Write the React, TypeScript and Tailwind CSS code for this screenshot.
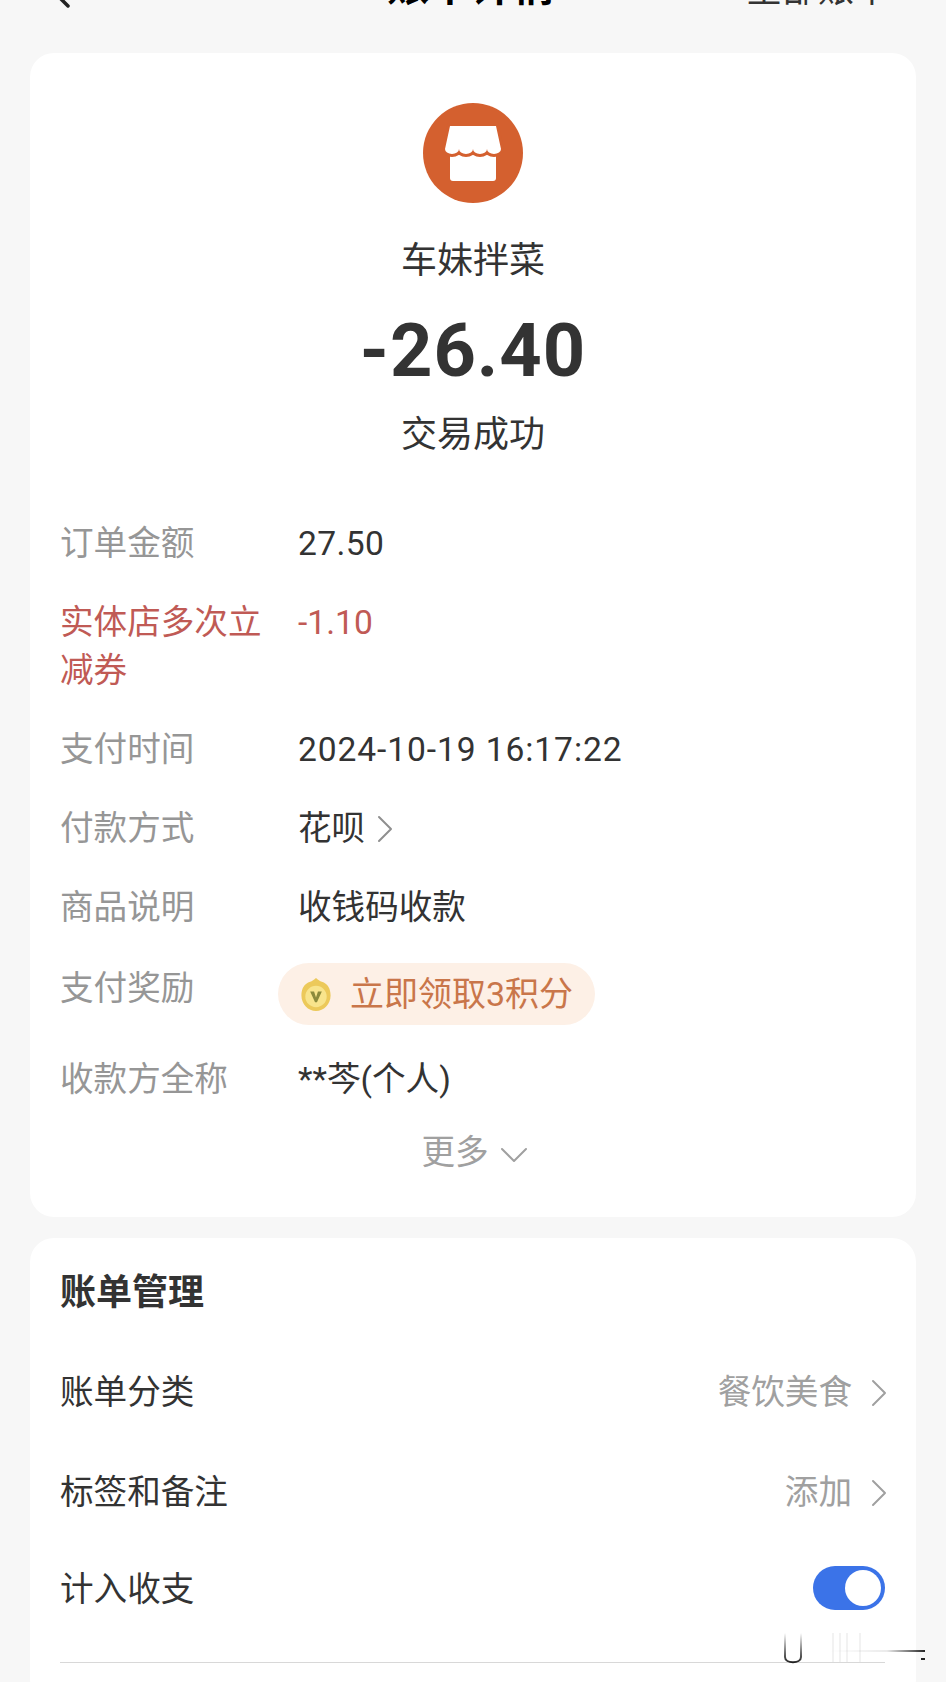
import { ChevronDown, ChevronLeft, ChevronRight } from "lucide-react";

const FONT = "font-['Roboto','Noto_Sans_CJK_SC',sans-serif]";

function Row({ label, children, className = "" }: { label: string; children: React.ReactNode; className?: string }) {
  return (
    <div className={`flex ${className}`}>
      <div className="w-[238px] shrink-0 text-[#969696]">{label}</div>
      <div className="text-[#333333]">{children}</div>
    </div>
  );
}

function ManageRow({ label, value }: { label: string; value: string }) {
  return (
    <div className="flex h-[100px] items-center justify-between">
      <span>{label}</span>
      <span className="flex items-center text-[#a0a0a0]">
        {value}
        <ChevronRight className="ml-[3px] mr-[-18px] size-[48px]" strokeWidth={1} />
      </span>
    </div>
  );
}

function ShopIcon() {
  return (
    <svg viewBox="0 0 100 100" className="size-[100px]">
      <circle cx="50" cy="50" r="50" fill="#d4602f" />
      <rect x="27" y="46" width="46" height="32" rx="3" fill="#fff" />
      <path
        d="M27 23h46l5 23a7 5 0 0 1-14 0a7 5 0 0 1-14 0a7 5 0 0 1-14 0a7 5 0 0 1-14 0z"
        fill="#fff"
        stroke="#d4602f"
        strokeWidth="6"
        paintOrder="stroke"
      />
    </svg>
  );
}

function CoinIcon() {
  return (
    <svg viewBox="0 0 32 36" className="h-[35px] w-[32px]">
      <path d="M16 1c2 2 4 3 6 4 6 2 9 7 9 14 0 9-7 16-15 16S1 28 1 19C1 12 4 7 10 5c2-1 4-2 6-4z" fill="#ecc95a" />
      <circle cx="16" cy="20" r="11" fill="#f8e48c" />
      <path d="M10 15h4l2 6 2-6h4l-5 11h-2z" fill="#8c8a3c" />
    </svg>
  );
}

export default function App() {
  return (
    <div className={`${FONT} relative h-[1682px] w-[946px] overflow-hidden bg-[#f7f7f7] text-[33.6px] leading-[48px] text-[#333333]`}>
      {/* Header, cut off by the top of the screenshot */}
      <div className="mt-[-37px] flex h-[48px] items-center pl-[33px]">
        <ChevronLeft className="mt-[10px] size-[56px] shrink-0 text-[#222222]" strokeWidth={1.5} />
        <span className="ml-[298px] shrink-0 text-[42px] font-bold text-black">账单详情</span>
        <span className="ml-[191px] mt-[6px] shrink-0 text-[36px] text-[#333333]">全部账单</span>
      </div>

      <div className="mx-[30px] mt-[42px] h-[1164px] rounded-[24px] bg-white px-[30px] pt-[50px]">
        <div className="flex flex-col items-center">
          <ShopIcon />
          <div className="mt-[34px] text-[36px]">车妹拌菜</div>
          <div className="mt-[20px] text-[74px] font-bold leading-[92px] tracking-[1px] text-[#333333]">-26.40</div>
          <div className="mt-[14px] text-[36px]">交易成功</div>
        </div>

        <div className="mt-[61px] flex flex-col">
          <Row label="订单金额"><span className="tracking-[0.4px]">27.50</span></Row>
          <div className="mt-[31px] flex text-[#c05a55]">
            <div className="w-[238px] shrink-0 pr-[30px]">实体店多次立减券</div>
            <div>-1.10</div>
          </div>
          <Row label="支付时间" className="mt-[31px]"><span className="tracking-[0.9px]">2024-10-19 16:17:22</span></Row>
          <Row label="付款方式" className="mt-[31px]">
            <span className="flex items-center">
              花呗
              <ChevronRight className="ml-[-4px] size-[48px] text-[#8f8f8f]" strokeWidth={1} />
            </span>
          </Row>
          <Row label="商品说明" className="mt-[31px]">收钱码收款</Row>
          <div className="mt-[31px] flex">
            <div className="w-[218px] shrink-0 pt-[2px] text-[#969696]">支付奖励</div>
            <div className="flex h-[62px] w-[317px] items-center rounded-full bg-[#fdf0e6] pl-[22px] text-[#c9764a]">
              <CoinIcon />
              <span className="ml-[18px] text-[34px]">立即领取3积分</span>
            </div>
          </div>
          <Row label="收款方全称" className="mt-[31px]">**芩(个人)</Row>
          <div className="mt-[23px] flex items-center justify-center gap-[1px] pl-[13px] text-[#a0a0a0]">
            更多
            <ChevronDown className="mt-[4px] size-[48px]" strokeWidth={1} />
          </div>
        </div>
      </div>

      <div className="mx-[30px] mt-[21px] rounded-[24px] bg-white pl-[30px] pr-[31px]">
        <div className="pt-[31px] text-[36px] font-bold leading-[48px]">账单管理</div>
        <div className="mt-[26px]">
          <ManageRow label="账单分类" value="餐饮美食" />
          <ManageRow label="标签和备注" value="添加" />
          <div className="flex h-[94px] items-center justify-between">
            <span>计入收支</span>
            <div className="mb-[4px] flex h-[44px] w-[72px] items-center justify-end rounded-full bg-[#3b73e8] pr-[4px]">
              <div className="size-[36px] rounded-full bg-white" />
            </div>
          </div>
        </div>
        <div className="mt-[25px] h-px bg-[#d8d8d8]" />
        <div className="h-[40px]" />
      </div>

      {/* Smear left over in the bottom right of the screenshot */}
      <svg className="absolute left-[770px] top-[1628px] h-[40px] w-[170px]" viewBox="0 0 170 40">
        <defs>
          <linearGradient id="smearV" x1="0" y1="0" x2="0" y2="1">
            <stop offset="0" stopColor="#000" stopOpacity="0" />
            <stop offset="1" stopColor="#000" stopOpacity="0.85" />
          </linearGradient>
          <linearGradient id="smearH" x1="0" y1="0" x2="1" y2="0">
            <stop offset="0" stopColor="#000" stopOpacity="0" />
            <stop offset="0.6" stopColor="#000" stopOpacity="0.08" />
            <stop offset="1" stopColor="#000" stopOpacity="0.85" />
          </linearGradient>
        </defs>
        <path d="M15 5v24c0 7 16 7 16 0V5" fill="none" stroke="url(#smearV)" strokeWidth="2" />
        <path d="M63 5v29M70 5v29M77 5v29M90 5v29" stroke="#000" strokeOpacity="0.05" strokeWidth="2" />
        <rect x="60" y="22" width="95" height="2" fill="url(#smearH)" />
        <rect x="151" y="30" width="4" height="2" fill="#222" />
      </svg>
    </div>
  );
}
